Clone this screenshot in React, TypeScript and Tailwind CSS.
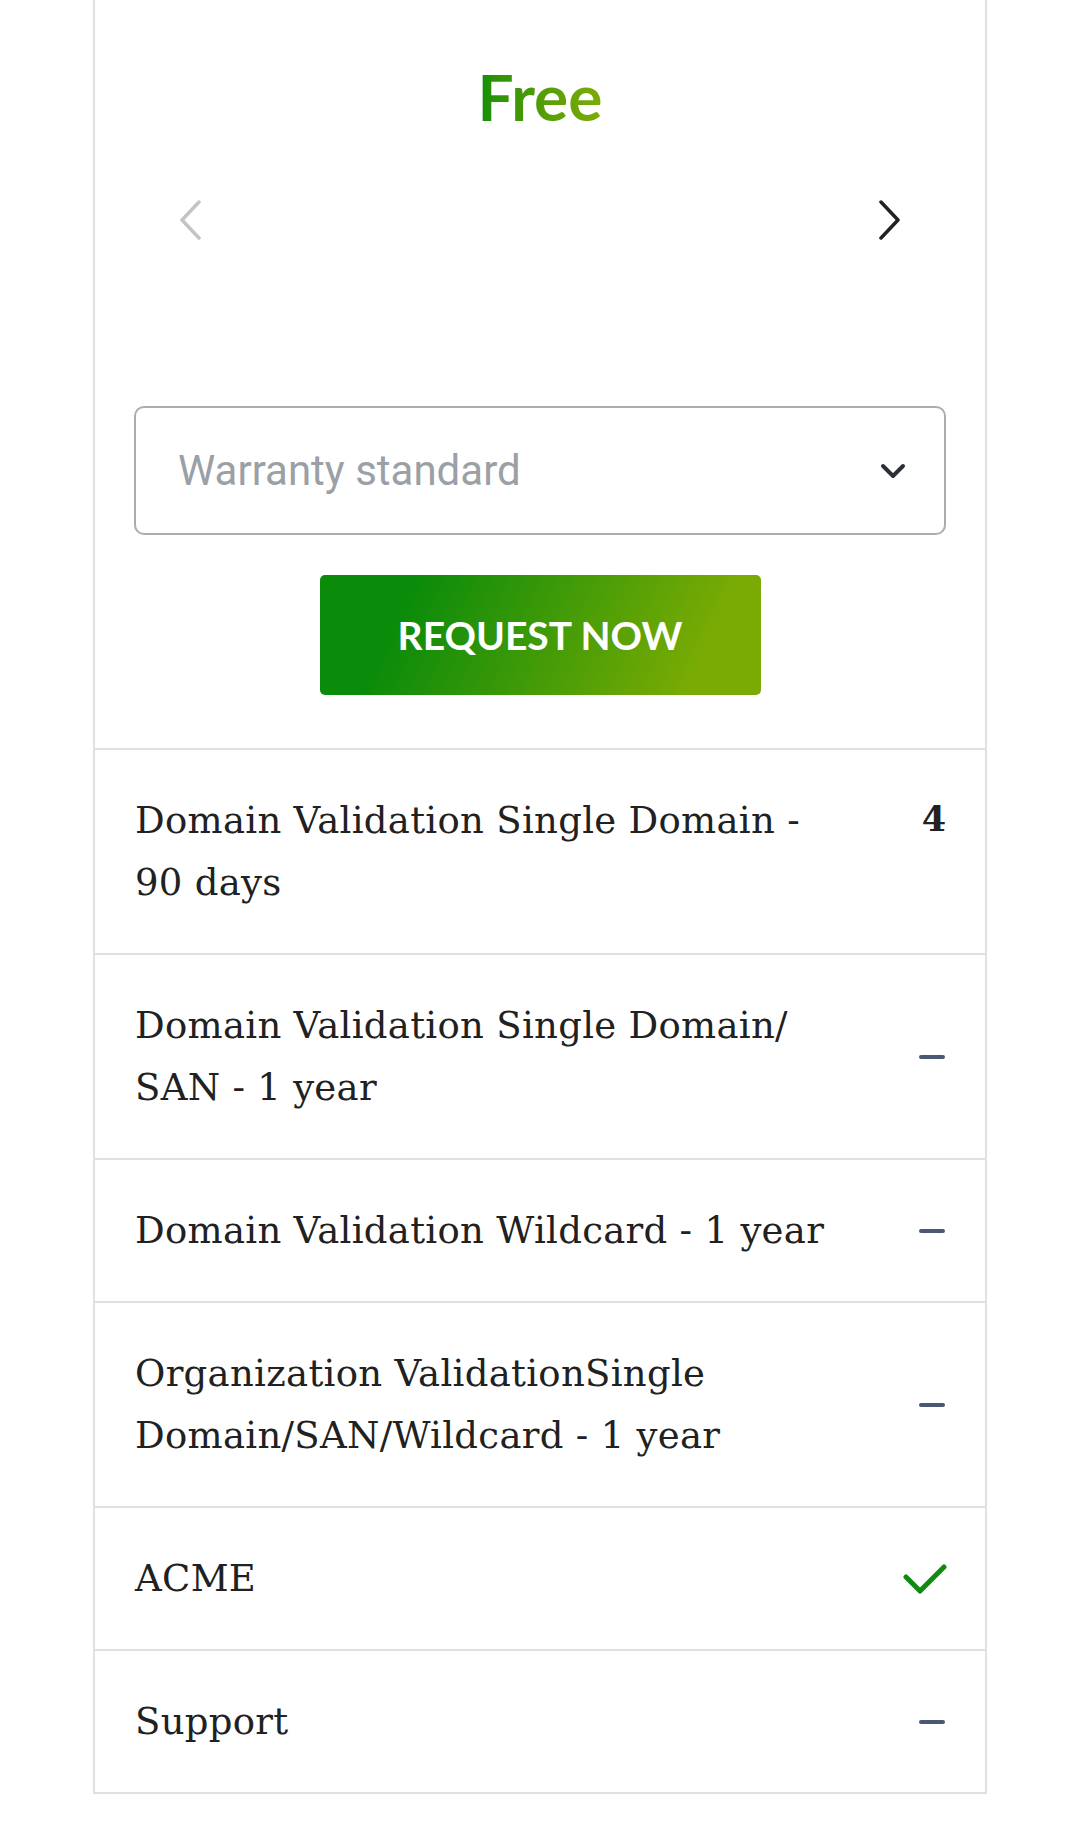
import type { ReactNode } from 'react'

type Mark = 'dash' | 'check' | { value: string }

const FEATURES: { label: string; mark: Mark }[] = [
  { label: 'Domain Validation Single Domain - 90 days', mark: { value: '4' } },
  { label: 'Domain Validation Single Domain/ SAN - 1 year', mark: 'dash' },
  { label: 'Domain Validation Wildcard - 1 year', mark: 'dash' },
  { label: 'Organization ValidationSingle Domain/SAN/Wildcard - 1 year', mark: 'dash' },
  { label: 'ACME', mark: 'check' },
  { label: 'Support', mark: 'dash' },
]

const serif = "font-['DejaVu_Serif',serif]"

function Chevron({ dir, className }: { dir: 'left' | 'right'; className?: string }) {
  return (
    <svg width="24" height="40" viewBox="0 0 24 40" fill="none" className={className}>
      <polyline
        points={dir === 'left' ? '21,2 4,20 21,38' : '3,2 20,20 3,38'}
        stroke="currentColor"
        strokeWidth="3.5"
        strokeLinecap="round"
        strokeLinejoin="round"
      />
    </svg>
  )
}

function FeatureMark({ mark }: { mark: Mark }) {
  if (mark === 'dash') return <span className="block w-[26px] h-[4px] rounded-full bg-[#4b5873]" />
  if (mark === 'check')
    return (
      <svg width="44" height="30" viewBox="0 0 44 30" fill="none" className="-mr-[2px] text-[#118a12]">
        <polyline
          points="3,13 17,27 41,3"
          stroke="currentColor"
          strokeWidth="5"
          strokeLinecap="round"
          strokeLinejoin="round"
        />
      </svg>
    )
  return (
    <span className={`${serif} -mr-[1px] text-[35px] leading-[58px] font-bold text-[#212121]`}>{mark.value}</span>
  )
}

function Row({ children, mark }: { children: ReactNode; mark: Mark }) {
  const top = typeof mark === 'object'
  return (
    <div
      className={`flex justify-between border-t-2 border-[#e0e0e0] pt-[40px] pb-[39px] px-[40px] ${
        top ? 'items-start' : 'items-center'
      }`}
    >
      <div className={`${serif} w-[702px] text-[37px] tracking-[0.3px] leading-[62px] text-[#212121]`}>
        {children}
      </div>
      <FeatureMark mark={mark} />
    </div>
  )
}

export default function App() {
  return (
    <div className="min-h-[1846px] bg-white">
      <div className="mx-auto w-[894px] border-2 border-t-0 border-[#e0e0e0]">
        {/* plan header */}
        <div className="pt-[65px] pb-[53px] px-[39px]">
          <h1 className="text-center font-['Lato',sans-serif] font-bold text-[64px] leading-[64px]">
            <span className="bg-gradient-to-r from-[#0c8e08] to-[#7cac05] bg-clip-text text-transparent">
              Free
            </span>
          </h1>

          <div className="mt-[71px] flex justify-between px-[44px]">
            <Chevron dir="left" className="text-[#c4c4c4]" />
            <Chevron dir="right" className="text-[#222]" />
          </div>

          <button className="mt-[166px] flex w-full h-[129px] items-center justify-between rounded-[10px] border-2 border-[#a9adb1] pl-[42px] pr-[38px]">
            <span className="font-['Roboto',sans-serif] text-[42px] text-[#9aa0a6]">Warranty standard</span>
            <svg width="26" height="18" viewBox="0 0 26 18" fill="none" className="text-[#2a3038]">
              <polyline
                points="3,4 13,14 23,4"
                stroke="currentColor"
                strokeWidth="4"
                strokeLinecap="round"
                strokeLinejoin="round"
              />
            </svg>
          </button>

          <div className="mt-[40px] flex justify-center">
            <button className="w-[441px] h-[120px] rounded-[5px] bg-linear-115/srgb from-[#0b8b0a] from-20% to-[#7aab04] to-85% font-['Lato',sans-serif] font-bold text-[39px] text-white">
              REQUEST NOW
            </button>
          </div>
        </div>

        {FEATURES.map(f => (
          <Row key={f.label} mark={f.mark}>
            {f.label}
          </Row>
        ))}
      </div>
    </div>
  )
}
